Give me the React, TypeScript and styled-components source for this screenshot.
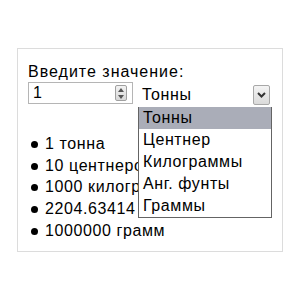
import React from "react";
import styled, { createGlobalStyle } from "styled-components";

const Global = createGlobalStyle`
  html, body { margin: 0; padding: 0; background: #fff; }
  body { font-family: "Liberation Sans", Arial, sans-serif; }
`;

const Page = styled.div`
  width: 300px;
  height: 300px;
  padding: 48px 0 0 17px;
  box-sizing: border-box;
`;

const Panel = styled.div`
  width: 266px;
  height: 204px;
  box-sizing: border-box;
  border: 1px solid #dcdcdc;
  padding: 14px 0 0 10px;
  position: relative;
`;

const Label = styled.div`
  font-size: 16px;
  letter-spacing: 1px;
  line-height: 18px;
  color: #000;
`;

const Controls = styled.div`
  display: flex;
  gap: 5px;
  margin-top: 1px;
`;

const NumberBox = styled.div`
  width: 105px;
  height: 22px;
  box-sizing: border-box;
  border: 1px solid #b5b5b5;
  display: flex;
  align-items: center;
  padding: 0 5px 0 4px;
  font-size: 16px;
`;

const NumberValue = styled.span`
  flex: 1;
`;

const Spinner = styled.div`
  width: 10px;
  height: 14px;
  border: 1px solid #a0a0a0;
  border-radius: 2px;
  background: linear-gradient(#f2f2f2, #d8d8d8);
  display: flex;
  flex-direction: column;
  align-items: center;
  justify-content: space-around;
`;

const SelectWrap = styled.div`
  position: relative;
`;

const SelectBox = styled.div`
  width: 134px;
  height: 25px;
  box-sizing: border-box;
  display: flex;
  align-items: center;
  padding-left: 4px;
  font-size: 16px;
  letter-spacing: 0.6px;
`;

const SelectText = styled.span`
  flex: 1;
`;

const ArrowBtn = styled.div`
  width: 17px;
  height: 20px;
  box-sizing: border-box;
  border: 1px solid #a8a8a8;
  border-radius: 2px;
  background: linear-gradient(#f4f4f4, #dadada);
  display: flex;
  align-items: center;
  justify-content: center;
  margin-right: 2px;
`;

const DropList = styled.ul`
  position: absolute;
  left: 0;
  top: 25px;
  width: 134px;
  margin: 0;
  padding: 0;
  list-style: none;
  box-sizing: border-box;
  border: 1px solid #646464;
  border-top: none;
  background: #fff;
  z-index: 2;
`;

const DropItem = styled.li<{ $active?: boolean }>`
  height: 22px;
  line-height: 22px;
  font-size: 16px;
  letter-spacing: 0.6px;
  padding-left: 4px;
  background: ${(p) => (p.$active ? "#aaadb8" : "transparent")};
`;

const Results = styled.ul`
  margin: 26px 0 0 0;
  padding: 0 0 0 17px;
  list-style: none;
`;

const ResultItem = styled.li`
  font-size: 16px;
  letter-spacing: 0.6px;
  line-height: 21.7px;
  white-space: nowrap;
  position: relative;
  &::before {
    content: "";
    position: absolute;
    left: -14px;
    top: 8px;
    width: 7px;
    height: 7px;
    border-radius: 50%;
    background: #000;
  }
`;

const units = ["Тонны", "Центнер", "Килограммы", "Анг. фунты", "Граммы"];
const results = [
  "1 тонна",
  "10 центнеров",
  "1000 килограмм",
  "2204.63414 фунтов",
  "1000000 грамм",
];

export default function App() {
  return (
    <>
      <Global />
      <Page>
        <Panel>
          <Label>Введите значение:</Label>
          <Controls>
            <NumberBox>
              <NumberValue>1</NumberValue>
              <Spinner>
                <svg width="6" height="4" viewBox="0 0 6 4">
                  <path d="M0 4 L3 0 L6 4 Z" fill="#555" />
                </svg>
                <svg width="6" height="4" viewBox="0 0 6 4">
                  <path d="M0 0 L3 4 L6 0 Z" fill="#555" />
                </svg>
              </Spinner>
            </NumberBox>
            <SelectWrap>
              <SelectBox>
                <SelectText>Тонны</SelectText>
                <ArrowBtn>
                  <svg width="9" height="6" viewBox="0 0 9 6">
                    <path d="M1 1 L4.5 4.5 L8 1" stroke="#333" strokeWidth="2" fill="none" />
                  </svg>
                </ArrowBtn>
              </SelectBox>
              <DropList>
                {units.map((u, i) => (
                  <DropItem key={u} $active={i === 0}>
                    {u}
                  </DropItem>
                ))}
              </DropList>
            </SelectWrap>
          </Controls>
          <Results>
            {results.map((r) => (
              <ResultItem key={r}>{r}</ResultItem>
            ))}
          </Results>
        </Panel>
      </Page>
    </>
  );
}
